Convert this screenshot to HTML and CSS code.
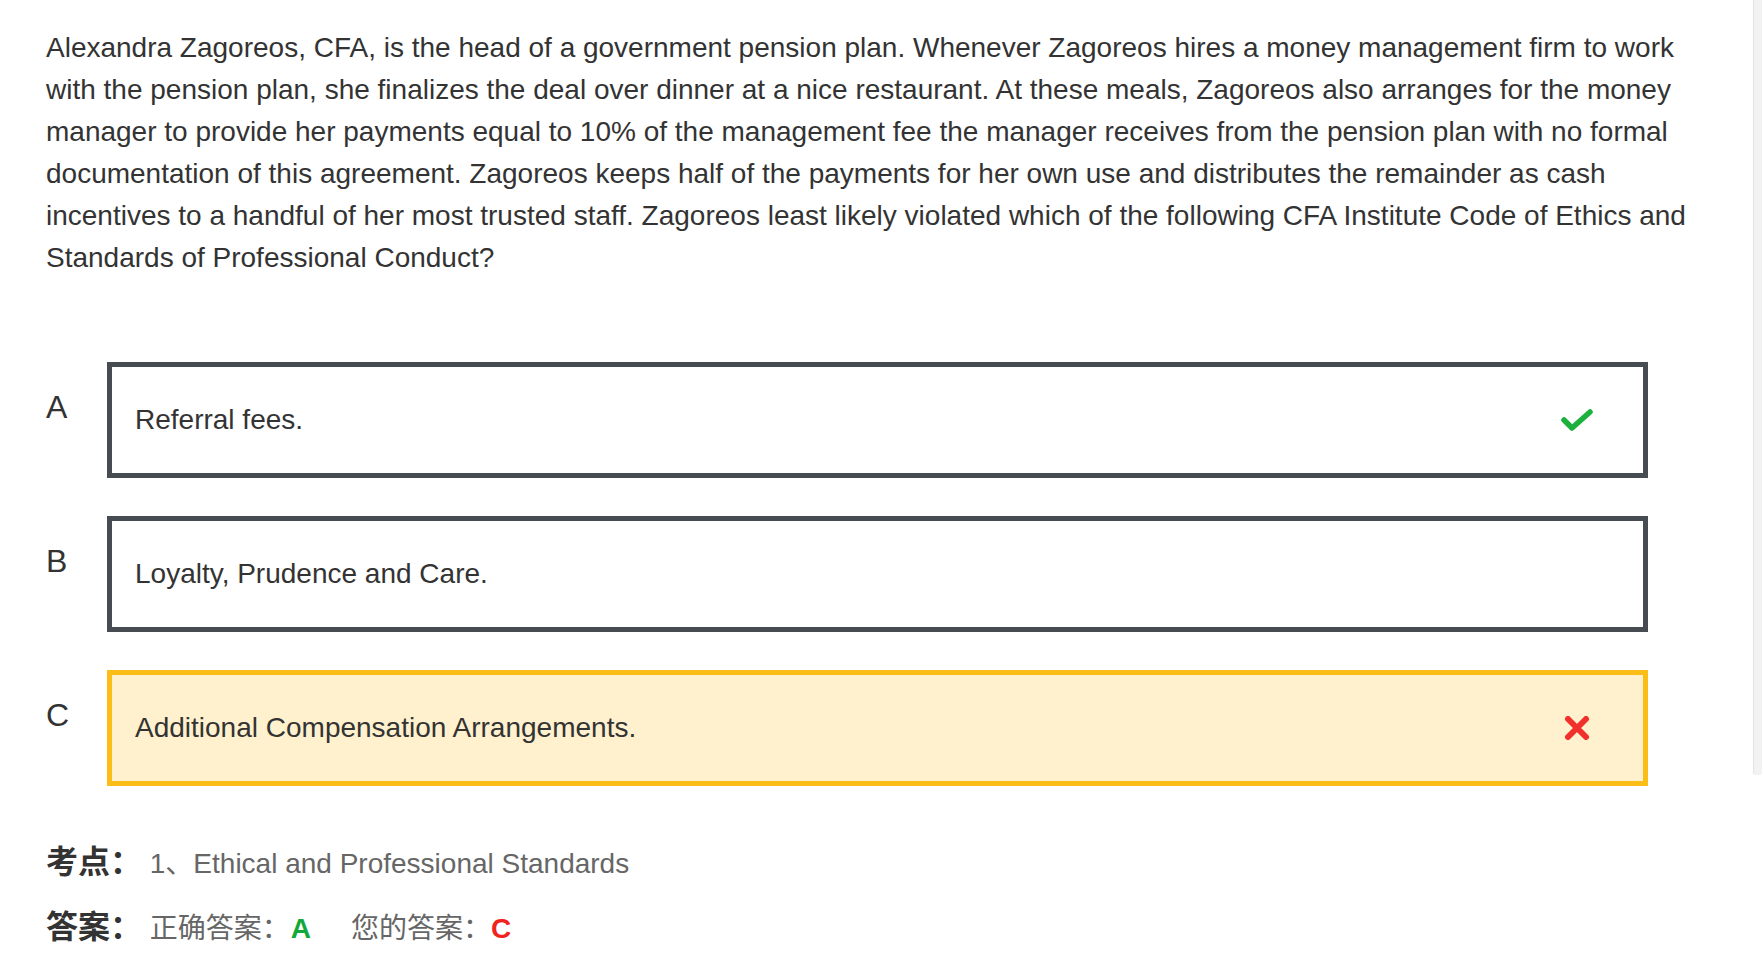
FILE: index.html
```html
<!DOCTYPE html>
<html lang="zh-CN">
<head>
    <meta charset="UTF-8">
    <meta name="viewport" content="width=device-width, initial-scale=1.0">
    <title>题目解析</title>
    <link rel="stylesheet" href="styles.css">
</head>
<body>
    <div class="page">
        <div class="main">
            <p class="question">Alexandra Zagoreos, CFA, is the head of a government pension plan. Whenever Zagoreos hires a money management firm to work with the pension plan, she finalizes the deal over dinner at a nice restaurant. At these meals, Zagoreos also arranges for the money manager to provide her payments equal to 10% of the management fee the manager receives from the pension plan with no formal documentation of this agreement. Zagoreos keeps half of the payments for her own use and distributes the remainder as cash incentives to a handful of her most trusted staff. Zagoreos least likely violated which of the following CFA Institute Code of Ethics and Standards of Professional Conduct?</p>

            <div class="options">
                <div class="option">
                    <div class="option-label">A</div>
                    <div class="option-box">
                        <span class="option-text">Referral fees.</span>
                        <span class="mark">
                            <svg width="32" height="24" viewBox="0 0 32 24">
                                <polyline points="3,12 11,20 29,4" fill="none" stroke="#1bb13c" stroke-width="5.5" stroke-linecap="round" stroke-linejoin="round"/>
                            </svg>
                        </span>
                    </div>
                </div>
                <div class="option">
                    <div class="option-label">B</div>
                    <div class="option-box">
                        <span class="option-text">Loyalty, Prudence and Care.</span>
                    </div>
                </div>
                <div class="option">
                    <div class="option-label">C</div>
                    <div class="option-box chosen">
                        <span class="option-text">Additional Compensation Arrangements.</span>
                        <span class="mark">
                            <svg width="32" height="24" viewBox="0 0 32 24">
                                <path d="M7 3 L25 21 M25 3 L7 21" fill="none" stroke="#f2302b" stroke-width="6" stroke-linecap="round"/>
                            </svg>
                        </span>
                    </div>
                </div>
            </div>

            <div class="info-row">
                <span class="info-title">考点：</span>
                <span class="info-value">1、Ethical and Professional Standards</span>
            </div>
            <div class="info-row">
                <span class="info-title">答案：</span>
                <span class="info-value">正确答案：<b class="right">A</b>您的答案：<b class="wrong">C</b></span>
            </div>
        </div>
        <div class="scrollbar">
            <div class="thumb"></div>
        </div>
    </div>
</body>
</html>
```

FILE: styles.css
```css
body {
    margin: 0;
    font-family: "Liberation Sans", Arial, "Noto Sans CJK SC", sans-serif;
    color: #333;
    background: #fff;
}
.page {
    display: flex;
    height: 959px;
    overflow: hidden;
}
.main {
    flex: 1;
    padding: 27px 0 0 46px;
}
.question {
    margin: 0;
    width: 1664px;
    font-size: 28px;
    line-height: 42px;
    color: #333;
}
.options {
    margin-top: 83px;
    width: 1602px;
}
.option {
    display: flex;
    align-items: flex-start;
    margin-bottom: 38px;
}
.option:last-child {
    margin-bottom: 0;
}
.option-label {
    width: 61px;
    margin-top: 24px;
    font-size: 32px;
    line-height: 42px;
}
.option-box {
    flex: 1;
    display: flex;
    align-items: center;
    height: 106px;
    padding: 0 50px 0 23px;
    border: 5px solid #474c53;
    background: #fff;
    font-size: 28px;
    line-height: 42px;
}
.option-box.chosen {
    background: #fff1cd;
    border-color: #fbbd16;
}
.option-text {
    flex: 1;
}
.mark {
    display: flex;
    width: 32px;
    height: 24px;
}
.info-row {
    font-size: 28px;
    line-height: 42px;
    height: 42px;
    margin-top: 23px;
}
.options + .info-row {
    margin-top: 55px;
}
.info-title {
    font-size: 32px;
    font-weight: bold;
    color: #333;
}
.info-value {
    color: #666;
}
.right {
    color: #12a83a;
    margin: 0 40px 0 1px;
}
.wrong {
    color: #f0231d;
}
.scrollbar {
    width: 9px;
    flex-shrink: 0;
}
.thumb {
    height: 775px;
    background: #f2f2f2;
    border-left: 1px solid #e4e4e4;
    border-radius: 0 0 3px 3px;
}
```
